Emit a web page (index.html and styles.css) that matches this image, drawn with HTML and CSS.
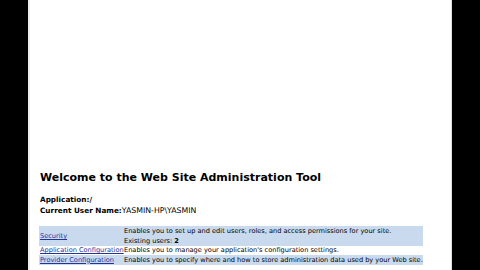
FILE: index.html
```html
<!DOCTYPE html>
<html>
<head>
<meta charset="utf-8">
<link rel="stylesheet" href="styles.css">
</head>
<body>
<div class="screen">
  <div class="page">
    <h1 class="title">Welcome to the Web Site Administration Tool</h1>
    <div class="info">
      <div class="line"><b>Application:/</b></div>
      <div class="line"><b>Current User Name:</b><span class="val">YASMIN-HP\YASMIN</span></div>
    </div>
    <table class="tools">
      <colgroup><col class="c1"><col class="c2"></colgroup>
      <tr class="alt tall">
        <td class="name"><a href="#">Security</a></td>
        <td class="desc">Enables you to set up and edit users, roles, and access permissions for your site.<br>Existing users: <b>2</b></td>
      </tr>
      <tr class="r2">
        <td class="name"><a href="#">Application Configuration</a></td>
        <td class="desc">Enables you to manage your application's configuration settings.</td>
      </tr>
      <tr class="alt r3">
        <td class="name"><a href="#">Provider Configuration</a></td>
        <td class="desc">Enables you to specify where and how to store administration data used by your Web site.</td>
      </tr>
    </table>
  </div>
</div>
</body>
</html>
```

FILE: styles.css
```css
html, body {
  margin: 0;
  padding: 0;
  background: #000;
}
.screen {
  width: 480px;
  height: 270px;
  display: flex;
  justify-content: flex-start;
  overflow: hidden;
}
.page {
  margin-left: 28px;
  width: 424px;
  height: 270px;
  background: #fff;
  border-left: 2px solid #eeeeee;
  border-right: 1px solid #e0e0e0;
  padding-left: 10px;
  box-sizing: border-box;
  font-family: "DejaVu Sans", Verdana, sans-serif;
  color: #000;
}
.title {
  margin: 170px 0 0 0;
  font-size: 11px;
  font-weight: bold;
  line-height: 16px;
}
.info {
  margin-top: 8px;
  font-size: 7.3px;
  line-height: 11px;
}
.info .val {
  font-size: 7.8px;
}
.tools {
  margin-top: 10px;
  margin-left: -1px;
  width: 384px;
  border-collapse: collapse;
  table-layout: fixed;
  font-size: 6.6px;
}
.tools .c1 {
  width: 84px;
}
.tools td {
  padding: 0 1px;
  line-height: 9px;
  vertical-align: middle;
  white-space: nowrap;
  overflow: visible;
}
.tools tr.alt td {
  background: #c9daee;
}
.tools tr.tall td {
  height: 19px;
  line-height: 10px;
}
.tools tr.r2 td {
  height: 9px;
}
.tools tr.r3 td {
  height: 10px;
}
.tools a {
  color: #2233a0;
  text-decoration: underline;
}
```
